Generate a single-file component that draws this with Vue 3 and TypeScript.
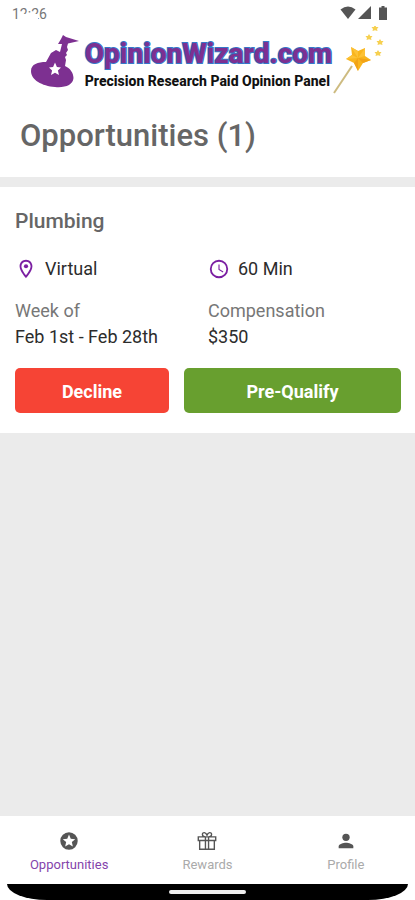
<script setup lang="ts">
import { ref } from 'vue'

interface Opportunity {
  title: string
  place: string
  duration: string
  week: string
  compensation: string
}

type TabId = 'opportunities' | 'rewards' | 'profile'

const opportunities = ref<Opportunity[]>([
  {
    title: 'Plumbing',
    place: 'Virtual',
    duration: '60 Min',
    week: 'Feb 1st - Feb 28th',
    compensation: '$350',
  },
])

const tabs: { id: TabId; label: string }[] = [
  { id: 'opportunities', label: 'Opportunities' },
  { id: 'rewards', label: 'Rewards' },
  { id: 'profile', label: 'Profile' },
]
const active = ref<TabId>('opportunities')
</script>

<template>
  <div class="app">
    <header class="top">
      <div class="status">
        <span class="time">12:26</span>
        <span class="signals">
          <svg width="16" height="14" viewBox="0 0 16 14"><path d="M0.5 3.5Q8-2.500 15.500 3.500L8 13Z" /></svg>
          <svg width="13" height="13" viewBox="0 0 13 13"><path d="M13 0V13H0Z" /></svg>
          <svg class="battery" width="8" height="14" viewBox="0 0 8 14"><path d="M2.500 0h3v1.500H8V14H0V1.500h2.500Z" /></svg>
        </span>
      </div>
      <div class="logo">
        <svg class="hat" width="50" height="56" viewBox="0 0 50 56">
          <path fill="#7d3091" d="M32 1L35 3L48 7L37 9.500L36 13L37 16L35 19L36 21L34 23L35 26L34 32C39 34 42.500 39 42.500 44C42 51 34 54 24 53C11 52 0 46 0 37C0 30 7 28 15 28L20 19L25 16L29 18L31 10L27 10L30 5Z" />
          <path fill="#fff" d="M24 28.500L25.900 32.900L30 33.400L26.900 36.500L28 41L24 38.800L20 41L21.100 36.500L18 33.400L22.100 32.900Z" />
        </svg>
        <div class="words">
          <span class="name">OpinionWizard.com</span>
          <span class="tagline">Precision Research Paid Opinion Panel</span>
        </div>
        <svg class="wand" width="52" height="70" viewBox="0 0 52 70">
          <path d="M2 67L20 40" stroke="#cdbb80" stroke-width="2" />
          <path fill="#f9b51d" d="M19 21L26 25L33 22L33 30L39 34L31 37L26 45L22 37L14 33L20 29Z" />
          <path fill="#fdc236" d="M19 21L26 25L26 32ZM14 33L20 29L26 32ZM33 22L33 30L26 32Z" />
          <path fill="#f2a316" d="M39 34L31 37L26 32ZM26 45L22 37L26 32Z" />
          <path fill="#f6d050" d="M43-1l1.200 2h2.300l-1.500 2l.5 2l-2.500-.8l-2.500.8l.5-2l-1.500-2h2.300ZM37 8l1.200 2h2.300l-1.500 2l.5 2l-2.500-.8l-2.500.8l.5-2l-1.500-2h2.300ZM48 13l1.200 2h2.300l-1.500 2l.5 2l-2.500-.8l-2.500.8l.5-2l-1.500-2h2.300ZM46 24l1.200 2h2.300l-1.500 2l.5 2l-2.500-.8l-2.500.8l.5-2l-1.500-2h2.300Z" />
        </svg>
      </div>
      <h1>Opportunities ({{ opportunities.length }})</h1>
    </header>

    <main class="list">
      <article v-for="item in opportunities" :key="item.title" class="card">
        <h2>{{ item.title }}</h2>
        <div class="facts">
          <div class="fact">
            <svg width="22" height="22" viewBox="0 0 24 24" fill="#7b1fa2"><path d="M12 2C8.100 2 5 5.100 5 9c0 5.300 7 13 7 13s7-7.700 7-13c0-3.900-3.100-7-7-7zM7 9c0-2.800 2.200-5 5-5s5 2.200 5 5c0 2.900-2.900 7.200-5 9.900C9.900 16.200 7 11.800 7 9z" /><circle cx="12" cy="9" r="2.300" /></svg>
            {{ item.place }}
          </div>
          <div class="fact">
            <svg width="22" height="22" viewBox="0 0 24 24" fill="none" stroke="#7b1fa2"><circle cx="12" cy="12" r="9" stroke-width="2" /><path d="M12 7v5.500l4.500 2.700" stroke-width="1.200" /></svg>
            {{ item.duration }}
          </div>
        </div>
        <dl class="facts">
          <div>
            <dt>Week of</dt>
            <dd>{{ item.week }}</dd>
          </div>
          <div>
            <dt>Compensation</dt>
            <dd>{{ item.compensation }}</dd>
          </div>
        </dl>
        <div class="actions">
          <button type="button" class="decline">Decline</button>
          <button type="button" class="qualify">Pre-Qualify</button>
        </div>
      </article>
    </main>

    <nav class="tabs">
      <button
        v-for="tab in tabs"
        :key="tab.id"
        type="button"
        :class="{ active: active === tab.id }"
        @click="active = tab.id"
      >
        <svg v-if="tab.id === 'opportunities'" width="22" height="22" viewBox="0 0 24 24"><path fill="#555" d="M12 2.500a9.500 9.500 0 1 0 0 19a9.500 9.500 0 1 0 0-19ZM16.200 18L12 15.450L7.800 18l1.100-4.800l-3.700-3.200l4.900-.4L12 5l1.900 4.600l4.900.4l-3.700 3.200Z" /></svg>
        <svg v-else-if="tab.id === 'rewards'" width="22" height="22" viewBox="0 0 24 24" fill="none" stroke="#555" stroke-width="1.500"><path d="M2.500 7.500h19v4h-19ZM4 11.500h16v9.500H4ZM10.300 7.500V21M13.700 7.500V21M12 7.500C10 7.500 7 7 7 4.800C7 2 11 2 12 6C13 2 17 2 17 4.800C17 7 14 7.500 12 7.500Z" /></svg>
        <svg v-else width="22" height="22" viewBox="0 0 24 24" fill="#555"><circle cx="12" cy="8" r="4" /><path d="M4 20v-2c0-2.700 5.300-4 8-4s8 1.300 8 4v2Z" /></svg>
        {{ tab.label }}
      </button>
    </nav>
    <div class="system"><span class="handle"></span></div>
  </div>
</template>

<style>
body {
  background: #fff;
}
</style>

<style scoped>
.app {
  display: flex;
  flex-direction: column;
  min-height: 100vh;
  background: #fff;
  color: #2c2c2c;
  font-family: Roboto, "Liberation Sans", sans-serif;
}
.top {
  padding-bottom: 23px;
}
.status {
  display: flex;
  justify-content: space-between;
  height: 26px;
  padding: 6px 28px 0 12px;
  box-sizing: border-box;
  color: #777;
  font-size: 14px;
  line-height: 16px;
}
.time {
  position: relative;
}
/* The middle digits of the clock fade out in their lower half. */
.time::after {
  content: "";
  position: absolute;
  top: 8px;
  left: 8px;
  width: 18px;
  height: 7px;
  background: #fff;
}
.signals {
  display: flex;
  gap: 2px;
  fill: #555;
}
.battery {
  margin-left: 6px;
}
.logo {
  display: flex;
  justify-content: center;
  height: 70px;
}
.hat {
  margin-top: 8px;
}
.words {
  display: flex;
  flex-direction: column;
  margin-left: 4px;
  padding-top: 11px;
  white-space: nowrap;
}
.name {
  color: #7d3091;
  font-size: 28px;
  font-weight: 800;
  line-height: 34px;
  -webkit-text-stroke: 2px #3478c8;
  paint-order: stroke fill;
}
.tagline {
  color: #111;
  font-size: 14px;
  font-weight: 800;
  line-height: 20px;
}
h1 {
  margin: 22px 20px 0;
  color: #666;
  font-size: 31px;
  font-weight: 500;
  line-height: 36px;
}
.list {
  flex: 1;
  padding-top: 10px;
  background: #ebebeb;
}
.card {
  padding: 22px 14px 20px 15px;
  background: #fff;
}
h2 {
  margin: 0 0 23px;
  color: #666;
  font-size: 21px;
  font-weight: 500;
  line-height: 24px;
}
.facts {
  display: grid;
  grid-template-columns: 1fr 1fr;
  margin: 0 0 16px;
  font-size: 18px;
  line-height: 26px;
}
dl.facts {
  margin-bottom: 18px;
}
.fact {
  display: flex;
  align-items: center;
  gap: 8px;
}
dt {
  color: #777;
}
dd {
  margin: 0;
}
.actions {
  display: grid;
  grid-template-columns: 154fr 217fr;
  gap: 15px;
}
button {
  border: 0;
  font-family: inherit;
  cursor: pointer;
}
.actions button {
  height: 45px;
  padding: 2px 0 0;
  border-radius: 5px;
  color: #fff;
  font-size: 18px;
  font-weight: 700;
}
.decline {
  background: #f64435;
}
.actions .qualify {
  background: #689f2f;
}
.tabs {
  display: grid;
  grid-template-columns: repeat(3, 1fr);
  height: 68px;
}
.tabs button {
  display: flex;
  flex-direction: column;
  align-items: center;
  gap: 5px;
  padding: 14px 0 0;
  background: none;
  color: #aaa;
  font-size: 13px;
  line-height: 16px;
}
.tabs .active {
  color: #8444ac;
}
.system {
  display: flex;
  justify-content: center;
  height: 16px;
  margin: 0 7px;
  padding-top: 6px;
  box-sizing: border-box;
  border-radius: 0 0 40px 40px / 0 0 16px 16px;
  background: #000;
}
.handle {
  width: 77px;
  height: 4px;
  border-radius: 2px;
  background: #eee;
}
</style>
